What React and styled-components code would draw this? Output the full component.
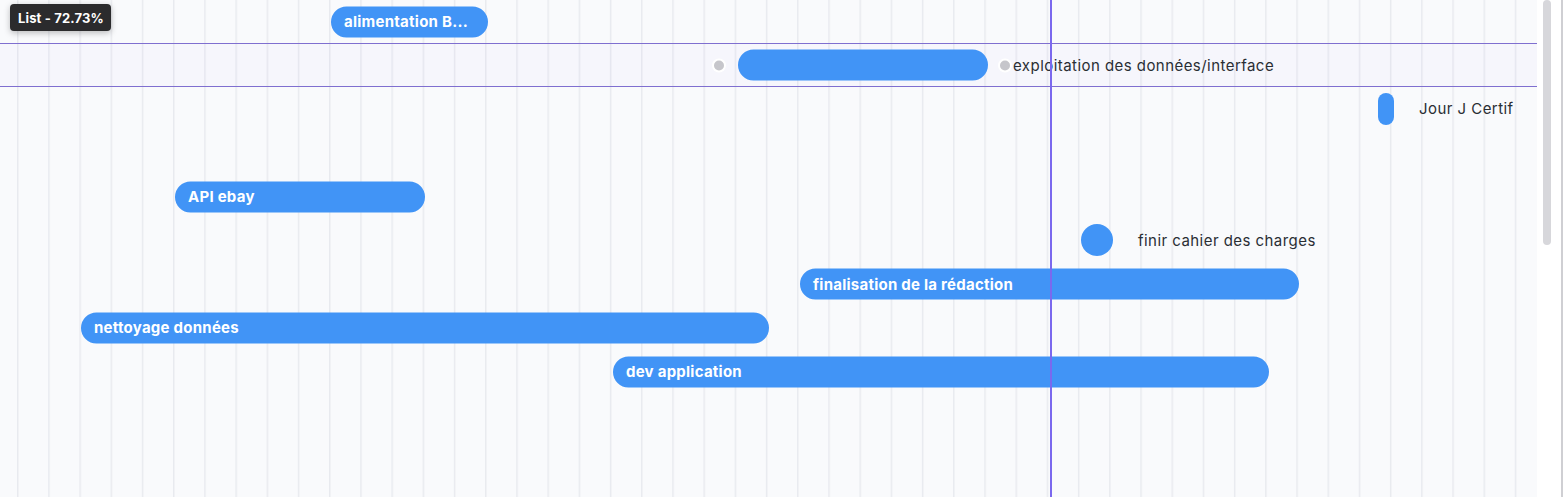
import React from "react";
import styled, { createGlobalStyle } from "styled-components";

const Global = createGlobalStyle`
  html, body { margin: 0; padding: 0; background: #ffffff; }
  body { font-family: Inter, "Open Sans", Lato, sans-serif; -webkit-font-smoothing: antialiased; }
  #root { height: 100vh; }
`;

const CELL = 31.21;

const Page = styled.div`
  display: flex;
  height: 497px;
  width: 1565px;
  overflow: hidden;
  background: #ffffff;
`;

const Chart = styled.div`
  position: relative;
  width: 1537px;
  height: 100%;
  overflow: hidden;
  background-color: #f9fafc;
  background-image: linear-gradient(
    to right,
    #e8eaef 0,
    #e8eaef 1px,
    #f1f2f5 1px,
    #f1f2f5 2px,
    transparent 2px
  );
  background-size: ${CELL}px 100%;
  background-position: 17px 0;
`;

const Rows = styled.div`
  display: flex;
  flex-direction: column;
`;

const Row = styled.div`
  position: relative;
  height: 43.8px;
  box-sizing: border-box;
  ${(p) =>
    p.$highlight &&
    `
    background: rgba(123, 104, 238, 0.025);
    border-top: 1px solid #7f6fd0;
    border-bottom: 1px solid #7f6fd0;
    margin-top: -0.5px;
  `}
`;

const Item = styled.div`
  position: absolute;
  top: 50%;
  transform: translateY(-50%);
  display: flex;
  align-items: center;
`;

const Bar = styled.div`
  box-sizing: border-box;
  height: 31px;
  border-radius: 16px;
  background: #4194f6;
  color: #ffffff;
  font-weight: 700;
  font-size: 15px;
  letter-spacing: 0.25px;
  display: flex;
  align-items: center;
  padding-left: 13px;
  padding-bottom: 1px;
  white-space: nowrap;
  overflow: hidden;
`;

const Milestone = styled.div`
  width: 16px;
  height: 32px;
  border-radius: 8px;
  background: #4194f6;
`;

const Circle = styled.div`
  width: 32px;
  height: 32px;
  border-radius: 50%;
  background: #4194f6;
`;

const Dot = styled.div`
  width: 10px;
  height: 10px;
  border-radius: 50%;
  background: #c6c6cb;
  box-shadow: 0 0 0 2px #ffffff;
  margin: ${(p) => p.$margin};
`;

const Label = styled.span`
  color: #2a2e34;
  font-size: 15px;
  font-weight: 400;
  letter-spacing: 0.45px;
  white-space: nowrap;
  margin-left: ${(p) => p.$gap}px;
`;

const TodayLine = styled.div`
  position: absolute;
  top: 0;
  bottom: 0;
  left: 1050px;
  width: 2px;
  background: #7b68ee;
  pointer-events: none;
`;

const Tooltip = styled.div`
  position: absolute;
  top: 4px;
  left: 10px;
  padding: 0 7px 0 8px;
  height: 27px;
  display: flex;
  align-items: center;
  border-radius: 4px;
  background: #2b2b2d;
  color: #ffffff;
  font-size: 13px;
  font-weight: 700;
  letter-spacing: 0.15px;
  box-shadow: 0 2px 6px rgba(0, 0, 0, 0.25);
  white-space: nowrap;
`;

const ScrollGutter = styled.div`
  position: relative;
  width: 24px;
  height: 100%;
  background: #ffffff;
  border-right: 2px solid #cfcfd3;
  box-sizing: content-box;
`;

const Thumb = styled.div`
  margin-left: 6px;
  width: 8px;
  height: 245px;
  border-radius: 4px;
  background: #d7d7db;
`;

const rows = [
  { kind: "bar", left: 331, width: 157, label: "alimentation B..." },
  {
    kind: "linked",
    highlight: true,
    left: 714,
    width: 250,
    label: "exploitation des données/interface",
  },
  { kind: "milestone", left: 1378, label: "Jour J Certif" },
  { kind: "empty" },
  { kind: "bar", left: 175, width: 250, label: "API ebay" },
  { kind: "circle", left: 1081, label: "finir cahier des charges" },
  { kind: "bar", left: 800, width: 499, label: "finalisation de la rédaction" },
  { kind: "bar", left: 81, width: 688, label: "nettoyage données" },
  { kind: "bar", left: 613, width: 656, label: "dev application" },
  { kind: "empty" },
  { kind: "empty" },
];

function RowContent({ row }) {
  if (row.kind === "bar") {
    return (
      <Item style={{ left: row.left }}>
        <Bar style={{ width: row.width }}>{row.label}</Bar>
      </Item>
    );
  }
  if (row.kind === "linked") {
    return (
      <Item style={{ left: row.left }}>
        <Dot $margin="0 14px 0 0" />
        <Bar style={{ width: row.width }} />
        <Dot $margin="0 0 0 12px" />
        <Label $gap={3}>{row.label}</Label>
      </Item>
    );
  }
  if (row.kind === "milestone") {
    return (
      <Item style={{ left: row.left }}>
        <Milestone />
        <Label $gap={25}>{row.label}</Label>
      </Item>
    );
  }
  if (row.kind === "circle") {
    return (
      <Item style={{ left: row.left }}>
        <Circle />
        <Label $gap={25}>{row.label}</Label>
      </Item>
    );
  }
  return null;
}

export default function App() {
  return (
    <>
      <Global />
      <Page>
        <Chart>
          <Rows>
            {rows.map((row, i) => (
              <Row key={i} $highlight={row.highlight}>
                <RowContent row={row} />
              </Row>
            ))}
          </Rows>
          <TodayLine />
          <Tooltip>List - 72.73%</Tooltip>
        </Chart>
        <ScrollGutter>
          <Thumb />
        </ScrollGutter>
      </Page>
    </>
  );
}
